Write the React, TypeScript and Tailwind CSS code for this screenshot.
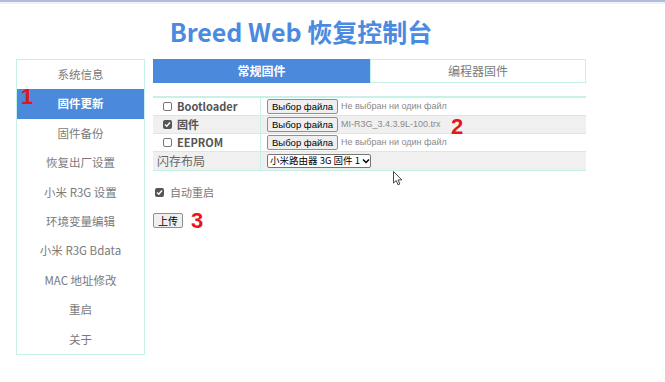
import React from "react";

const menu = [
  "系统信息",
  "固件更新",
  "固件备份",
  "恢复出厂设置",
  "小米 R3G 设置",
  "环境变量编辑",
  "小米 R3G Bdata",
  "MAC 地址修改",
  "重启",
  "关于",
];

function Box({ checked }: { checked?: boolean }) {
  if (checked) {
    return (
      <span className="inline-flex w-[9px] h-[9px] rounded-[2px] bg-[#555] items-center justify-center shrink-0">
        <svg width="7" height="7" viewBox="0 0 7 7">
          <path d="M1 3.6 L2.8 5.3 L6 1.5" stroke="white" strokeWidth="1.4" fill="none" />
        </svg>
      </span>
    );
  }
  return <span className="inline-block w-[9px] h-[9px] rounded-[2px] border border-[#767676] bg-white shrink-0" />;
}

function FileBtn() {
  return (
    <span className="inline-flex items-center h-[15px] px-[4px] border border-[#8f8f8f] rounded-[2px] bg-[#efefef] text-[9.5px] text-black leading-none whitespace-nowrap font-['Liberation_Sans',sans-serif]">
      Выбор файла
    </span>
  );
}

export default function App() {
  const font = "font-['Noto_Sans_CJK_SC','Open_Sans',sans-serif]";
  return (
    <div className={`relative w-[665px] h-[382px] bg-white overflow-hidden ${font}`}>
      <div className="h-[2px] bg-[#b3bedb]" />
      <div className="h-[2px] bg-[#eef1f6]" />
      <div className="ml-[16px] w-[570px]">
        <h1 className="h-[55px] pt-[9px] text-center text-[25px] font-bold text-[#4a8ae0] leading-[36px]">
          Breed Web 恢复控制台
        </h1>
        <div className="flex gap-[8px]">
          {/* Sidebar */}
          <div className="w-[129px] border border-[#c6f1e6] flex flex-col">
            {menu.map((m, i) => (
              <div
                key={m}
                className={`h-[29.4px] flex items-center justify-center text-[11.5px] ${
                  i === 1 ? "bg-[#4a89dc] text-white font-bold" : "text-[#7a7a7a]"
                }`}
              >
                {m}
              </div>
            ))}
          </div>

          {/* Main */}
          <div className="flex-1">
            <div className="flex h-[24px]">
              <div className="w-[217px] bg-[#4a89dc] text-white font-bold text-[12px] flex items-center justify-center">
                常规固件
              </div>
              <div className="flex-1 border border-[#c6f1e6] text-[#7a7a7a] text-[12px] flex items-center justify-center">
                编程器固件
              </div>
            </div>

            <div className="mt-[13px] border-t-2 border-[#c6f1e6]">
              {[
                { label: "Bootloader", checked: false, text: "Не выбран ни один файл", bg: "bg-white" },
                { label: "固件", checked: true, text: "MI-R3G_3.4.3.9L-100.trx", bg: "bg-[#f0f0f0]" },
                { label: "EEPROM", checked: false, text: "Не выбран ни один файл", bg: "bg-white" },
              ].map((r) => (
                <div key={r.label} className={`flex h-[18px] border-b border-[#c6f1e6] ${r.bg}`}>
                  <div className="w-[108px] border-r border-[#c6f1e6] flex items-center gap-[5px] pl-[10px]">
                    <Box checked={r.checked} />
                    <span className="text-[11px] font-bold text-[#555] leading-none">{r.label}</span>
                  </div>
                  <div className="flex items-center pl-[6px] gap-[3px]">
                    <FileBtn />
                    <span className="text-[9px] text-[#8a8a8a] whitespace-nowrap font-['Liberation_Sans',sans-serif]">
                      {r.text}
                    </span>
                  </div>
                </div>
              ))}
              <div className="flex h-[19px] border-b border-[#c6f1e6] bg-[#f0f0f0]">
                <div className="w-[108px] border-r border-[#c6f1e6] flex items-center pl-[4px]">
                  <span className="text-[12px] text-[#666] leading-none">闪存布局</span>
                </div>
                <div className="flex items-center pl-[6px]">
                  <span className="inline-flex items-center gap-[2px] h-[14px] w-[104px] px-[2px] border border-[#767676] rounded-[2px] bg-white text-[9.5px] text-black leading-none whitespace-nowrap">
                    小米路由器 3G 固件 1
                    <svg width="8" height="6" viewBox="0 0 8 6" className="ml-auto shrink-0">
                      <path d="M1 1.5 L4 4.5 L7 1.5" stroke="black" strokeWidth="1.5" fill="none" />
                    </svg>
                  </span>
                </div>
              </div>
            </div>

            <div className="mt-[13px] ml-[2px] flex items-center gap-[6px]">
              <Box checked />
              <span className="text-[11px] text-[#7a7a7a]">自动重启</span>
            </div>

            <div className="mt-[9px] flex items-center gap-[8px]">
              <span className="inline-flex items-center h-[15px] px-[4px] border border-[#8f8f8f] rounded-[2px] bg-[#efefef] text-[10px] text-black leading-none">
                上传
              </span>
              <span className="text-[22px] font-bold text-[#e8141c] leading-none font-['Liberation_Sans',sans-serif]">3</span>
            </div>
          </div>
        </div>
      </div>

      {/* annotations */}
      <span className="absolute left-[451px] top-[116px] text-[22px] font-bold text-[#e8141c] leading-none font-['Liberation_Sans',sans-serif]">
        2
      </span>
      <span className="absolute left-[21px] top-[86px] text-[22px] font-bold text-[#e8141c] leading-none font-['Liberation_Sans',sans-serif]">
        1
      </span>
      <svg className="absolute left-[393px] top-[171px]" width="10" height="15" viewBox="0 0 10 15">
        <path d="M0.5 0.5 L0.5 12 L3.2 9.5 L5 13.8 L6.8 13 L5.1 8.9 L8.8 8.9 Z" fill="white" stroke="#333" strokeWidth="0.9" />
      </svg>
    </div>
  );
}
